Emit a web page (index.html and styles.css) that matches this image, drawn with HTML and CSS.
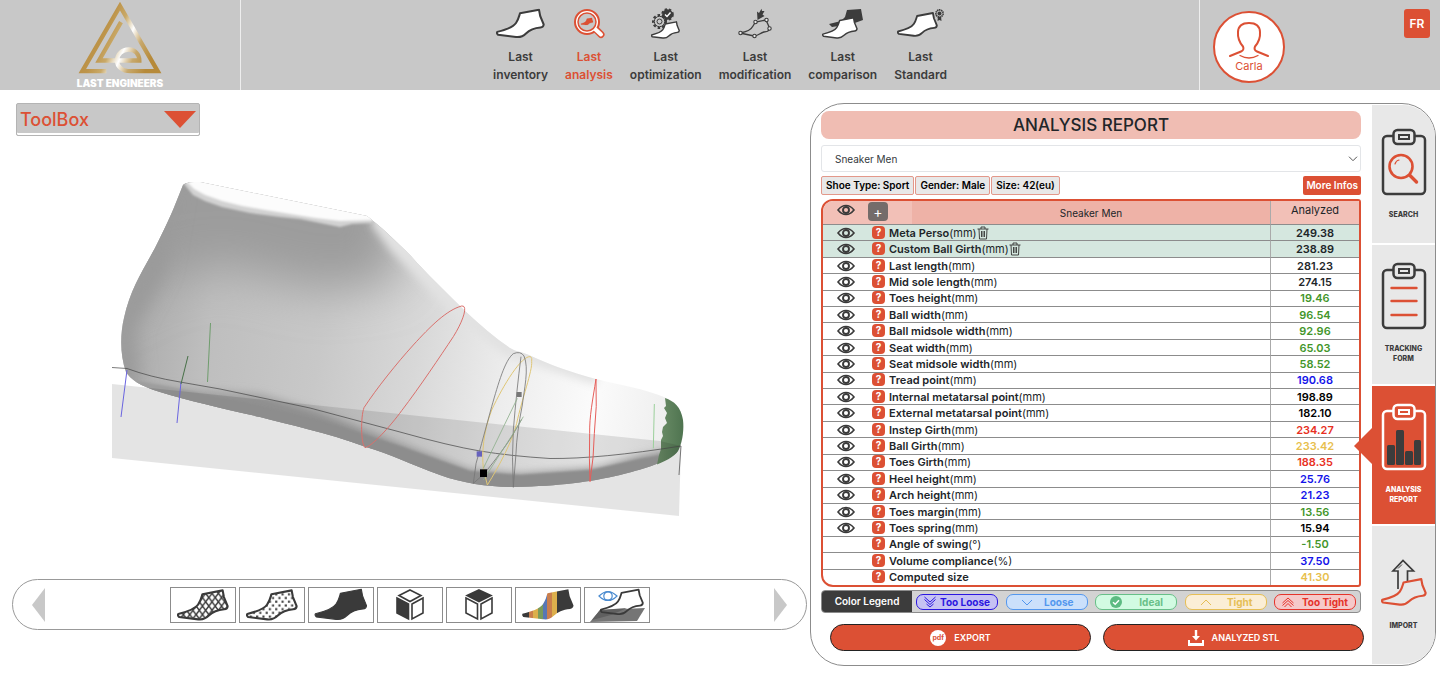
FILE: index.html
```html
<!DOCTYPE html>
<html lang="en">
<head>
<meta charset="utf-8">
<title>Last Engineers - Last analysis</title>
<meta name="viewport" content="width=device-width, initial-scale=1">
<link rel="stylesheet" href="styles.css">
</head>
<body>
<svg class="defs" aria-hidden="true">
  <symbol id="foot" viewBox="0 0 49 30"><path d="M1.2 23.4C9 21.500 17 19 20 14.500C22.500 11 23 8 24 4.800L43 1.200L44.200 7.500L47.700 16Q47.500 18.800 44.500 19C38 19.500 33 22 30 25C27 28 24 29 20 28.500L2 26.300Q.4 24.800 1.200 23.400Z" stroke-linejoin="round"/></symbol>
  <symbol id="eye" viewBox="0 0 18 12"><path d="M1 6Q4.500 1.500 9 1.500T17 6Q13.500 10.500 9 10.500T1 6Z" fill="none" stroke="#3a3a3a" stroke-width="1.600"/><circle cx="9" cy="6" r="3" fill="none" stroke="#3a3a3a" stroke-width="1.900"/></symbol>
  <symbol id="trash" viewBox="0 0 12 14"><path d="M.5 3H11.500M4 3V1H8V3M2 3L2.500 13H9.500L10 3M4.500 5V11M6 5V11M7.500 5V11" fill="none" stroke="#333" stroke-width=".9"/></symbol>
  <symbol id="board" viewBox="0 0 46 68"><rect x="2" y="8" width="42" height="58" rx="4" fill="none" stroke="currentColor" stroke-width="2.500"/><rect x="12.500" y="2" width="21" height="14" rx="4" class="board-clip" stroke="currentColor" stroke-width="2.500"/><rect x="18" y="7" width="10" height="4" fill="none" stroke="currentColor" stroke-width="2"/></symbol>
</svg>

<header class="topbar">
  <a class="brand" href="#">
    <svg viewBox="234 4 252 218" class="brand-mark" aria-hidden="true">
      <defs><linearGradient id="gold" x1="240" y1="60" x2="460" y2="160" gradientUnits="userSpaceOnUse"><stop offset="0" stop-color="#b68a3a"/><stop offset=".35" stop-color="#bd944a"/><stop offset=".5" stop-color="#c9a968"/><stop offset=".58" stop-color="#e6dac0"/><stop offset=".65" stop-color="#fff"/><stop offset=".8" stop-color="#c7a86c"/><stop offset="1" stop-color="#b68a3a"/></linearGradient></defs>
      <path d="M319 214H247L360 19L473 214H392C366 214 351 200 351 182C351 163 367 149 386 149C405 149 418 163 418 182H297L363 67" fill="none" stroke="url(#gold)" stroke-width="13"/>
    </svg>
    <span class="brand-name">LAST ENGINEERS</span>
  </a>
  <nav class="mainnav">
    <a href="#"><svg viewBox="0 0 49 30" width="49" height="31" class="ink"><use href="#foot"/></svg><span>Last<br>inventory</span></a>
    <a href="#" class="current"><svg viewBox="0 0 32 30" width="32" height="31"><path d="M23 21L28 26" stroke="#dc5034" stroke-width="7" stroke-linecap="round"/><circle cx="14" cy="13.500" r="12" fill="#fff" stroke="#dc5034" stroke-width="2"/><path d="M22 20.500L28 26" stroke="#fff" stroke-width="4" stroke-linecap="round"/><circle cx="14" cy="13.500" r="9" fill="#c8c8c8" stroke="#dc5034" stroke-width="1.500"/><svg x="7.500" y="9" width="13" height="8" fill="#dc5034" stroke="#dc5034"><use href="#foot"/></svg></svg><span>Last<br>analysis</span></a>
    <a href="#"><svg viewBox="0 0 30 31" width="30" height="31"><circle cx="8.500" cy="13.500" r="6.300" fill="none" stroke="#3c3c3c" stroke-width="2.400" stroke-dasharray="2.500 2"/><circle cx="8.500" cy="13.500" r="5.200" fill="#c8c8c8" stroke="#3c3c3c" stroke-width="1"/><circle cx="8.500" cy="13.500" r="2.500" fill="none" stroke="#3c3c3c" stroke-width="1"/><circle cx="16.500" cy="6.500" r="4.300" fill="#3c3c3c" stroke="#3c3c3c" stroke-width="2"/><circle cx="16.500" cy="6.500" r="5.300" fill="none" stroke="#3c3c3c" stroke-width="2" stroke-dasharray="2.300 2"/><path d="M14 6.500L16 8.500L19.500 4.500" fill="none" stroke="#fff" stroke-width="1.400"/><svg x="0" y="13" width="29" height="18" fill="#fff" stroke="#3c3c3c" stroke-width="2.400"><use href="#foot"/></svg></svg><span>Last<br>optimization</span></a>
    <a href="#"><svg viewBox="0 0 34 31" width="34" height="31" fill="none" stroke="#3c3c3c"><path d="M2 25C8 24 13 22 15 18L17.500 14L28 12L32 21Q30 24 26 24C22 25 20 28 16 28Z" stroke-width="1.300"/><g fill="#e8e8e8" stroke-width="1.100"><circle cx="2.500" cy="25" r="1.700"/><circle cx="17.500" cy="14" r="1.700"/><circle cx="28.500" cy="12" r="1.700"/><circle cx="31.500" cy="20.500" r="1.700"/><circle cx="16.500" cy="28" r="1.700"/></g><path d="M19.500 12L19 3.500L21 5L23.500 .8L24 3L26.500 3L24.500 6.500L26.500 8Z" fill="#3c3c3c" stroke="none"/></svg><span>Last<br>modification</span></a>
    <a href="#"><svg viewBox="0 0 42 31" width="42" height="31"><path d="M25 2L39 1L41 12L30 16L10 19L7 16L19 13L23 9Z" fill="#3c3c3c"/><svg x="0" y="9" width="36" height="22" fill="#fff" stroke="#3c3c3c" stroke-width="2"><use href="#foot"/></svg></svg><span>Last<br>comparison</span></a>
    <a href="#"><svg viewBox="0 0 48 31" width="48" height="31"><svg x="0" y="4" width="41" height="25" fill="#fff" stroke="#3c3c3c" stroke-width="2.200"><use href="#foot"/></svg><path d="M41 8L40.500 13L42.500 12L44.500 13L44 8" fill="#3c3c3c"/><circle cx="42.500" cy="5.500" r="3.600" fill="#c8c8c8" stroke="#3c3c3c" stroke-width="1.700" stroke-dasharray="1.500 .5"/><circle cx="42.500" cy="5.500" r="2" fill="#3c3c3c"/></svg><span>Last<br>Standard</span></a>
  </nav>
  <div class="account">
    <button class="user" type="button"><svg viewBox="0 0 42 38" width="42" height="38" fill="none" stroke="#dc5034" stroke-linecap="round"><path d="M2 35L13 30.500Q16.500 29 15 25.500C12 22 9.500 17 10 11Q10.500 2 21 2T32 11C32.500 17 30 22 27 25.500Q25.500 29 29 30.500L40 35" stroke-width="2"/><path d="M12 34.500Q21 39.500 30 34.500" stroke-width="1.300"/></svg><span>Carla</span></button>
    <button class="lang" type="button">FR</button>
  </div>
</header>

<main class="workspace">
  <section class="viewer">
    <button class="toolbox" type="button"><span>ToolBox</span><svg viewBox="0 0 32 17" width="32" height="17" fill="#dc5034"><path d="M0 0H32L16 17Z"/></svg></button>
    <svg class="scene" viewBox="0 136 810 443" role="img" aria-label="3D view of the last">
      <defs>
        <path id="body-shape" d="M183 185C185 182.500 192 182 200 182L367 216C380 226 395 240 411 256C425 272 445 291 465 311C480 325 495 338 510 348C516 352 524 352 531 356C550 365 574 373 596 379C620 385 645 389 664 397C676 402 681 408 683 420C684 435 682 447 676 453C665 463 640 470 620 475C590 482 560 486 515 487C490 487 465 484 440 475C410 464 390 454 366 447C325 432 290 425 260 417C220 408 190 401 160 392C140 386 130 379 126 372C120 355 120 335 124 318C130 290 142 272 155 248Q170 218 175 205Z"/>
        <clipPath id="body-clip"><use href="#body-shape"/></clipPath>
        <linearGradient id="body-tone" x1="121" y1="330" x2="683" y2="420" gradientUnits="userSpaceOnUse"><stop offset="0" stop-color="#a8a8a8"/><stop offset=".15" stop-color="#bebebe"/><stop offset=".35" stop-color="#c8c8c8"/><stop offset=".52" stop-color="#d8d8d8"/><stop offset=".68" stop-color="#ededed"/><stop offset=".84" stop-color="#fbfbfb"/><stop offset="1" stop-color="#ececec"/></linearGradient>
        <linearGradient id="toe-tone" x1="0" x2="1"><stop offset="0" stop-color="#6d8f69"/><stop offset="1" stop-color="#4f7450"/></linearGradient>
        <filter id="soft-l" x="-50%" y="-50%" width="200%" height="200%"><feGaussianBlur stdDeviation="24"/></filter>
        <filter id="soft-m" x="-50%" y="-50%" width="200%" height="200%"><feGaussianBlur stdDeviation="9"/></filter>
        <filter id="soft-s" x="-50%" y="-50%" width="200%" height="200%"><feGaussianBlur stdDeviation="4"/></filter>
        <filter id="soft-xs"><feGaussianBlur stdDeviation="1"/></filter>
      </defs>
      <use href="#body-shape" fill="url(#body-tone)"/>
      <g clip-path="url(#body-clip)">
        <path d="M120 120L400 150L395 240L400 280L320 290L220 265L160 280L80 320Z" fill="#9c9c9c" filter="url(#soft-l)"/>
        <path d="M180 180L114 320L112 395L140 384L134 330L165 270Z" fill="#9a9a9a" filter="url(#soft-m)"/>
        <path d="M372 205L480 310L530 345L600 370L596 385L505 356L450 312L390 250L372 226Z" fill="#e2e2e2" filter="url(#soft-s)"/>
        <path d="M110 382L200 390L260 394L320 412L400 444L470 470L520 474L600 468L640 456L690 446V510H110Z" fill="#a0a0a0" filter="url(#soft-s)"/>
        <path d="M120 378L160 385L240 401L320 420L400 446L470 471L520 475L590 470L640 459L690 450V510H110Z" fill="#9e9e9e" filter="url(#soft-xs)"/>
        <path d="M184 184L193 195L205 201L222 207L250 213L280 217L300 219L320 223L340 227L352 224L372 223L372 205L190 175Z" fill="#d2d2d2" filter="url(#soft-xs)"/>
        <path d="M187 182L194 189L205 195L222 201L242 206L265 210L290 214L315 218L340 221L377 220L367 208L190 175Z" fill="#fcfcfc" filter="url(#soft-xs)"/>
      </g>
      <path d="M665 398L666 406L664 408L667 413L665 418L667 423L663 427L662 432L663 436L661 440V449L659 455L657 464.500C668 460 677 455 679 449C683 440 684 428 683 420C681 407 674 401 665 398Z" fill="url(#toe-tone)"/>
      <path d="M112 384L660 441L681 446L679 516L112 458Z" fill="#000" opacity=".105"/>
      <g fill="none" stroke-width="1">
        <path d="M112 367.500L127 368.500Q150 377 180 382L220 389L310 408L400 432Q450 446 480 451T550 458.500Q600 459 681 446L679 475" stroke="#444" opacity=".7"/>
        <path d="M127 370L121 417M181 382L177 423" stroke="#6a64e0"/>
        <path d="M188 356L181 384" stroke="#477047"/>
        <path d="M210.500 323L207.500 382" stroke="#6f9d6d"/>
      </g>
      <g transform="translate(340 290) scale(.33333)" fill="none" stroke-width="3">
        <path d="M365 48C320 60 270 110 220 165C170 220 110 295 72 353C62 380 62 460 75 473C95 470 150 410 185 362C240 290 300 200 340 140C365 100 380 60 372 50Q370 48 365 48Z" stroke="#d96f6b"/>
        <path d="M768 267C758 330 748 380 749 430Q747 510 750 575Q762 500 763 430Q772 350 768 267Z" stroke="#e65d59"/>
        <path d="M572 200C545 195 490 285 455 360C430 425 425 490 430 535L442 585C480 525 518 450 530 400C545 330 578 240 575 215Q577 204 572 200Z" stroke="#dfc675"/>
        <path d="M400 580Q404 520 425 460L455 350C475 280 495 210 520 191Q542 182 552 198C568 235 552 300 547 345Q530 430 528 490L520 592Q515 500 520 420Q530 300 543 200M400 580L432 552Q490 480 515 440L545 388" stroke="#777" stroke-width="2.500"/>
        <path d="M532 325L430 535M430 570L520 430L550 380" stroke="#8fb08d" stroke-width="2.500"/>
        <path d="M943 342L940 475" stroke="#9bd09b"/>
        <path d="M530 306H545V321H530Z" fill="#777" stroke="none"/><path d="M410 484H426V500H410Z" fill="#6762bd" stroke="none"/><path d="M420 538H441V561H420Z" fill="#000" stroke="none"/>
      </g>
    </svg>
    <div class="viewbar">
      <button class="step" type="button" aria-label="Previous"><svg viewBox="0 0 13 34" width="13" height="34" fill="#c8c8c8"><path d="M13 0V34L0 17Z"/></svg></button>
      <div class="modes">
        <button type="button" aria-label="Wireframe"><svg viewBox="0 0 52 32" width="52" height="32"><defs><pattern id="mesh" width="6" height="8" patternUnits="userSpaceOnUse"><path d="M0 0L6 8M6 0L0 8" stroke="#3a3a3a" stroke-width="1.400"/></pattern></defs><g fill="url(#mesh)" stroke="#3a3a3a" stroke-width="2"><use href="#foot" width="52" height="32"/></g></svg></button>
        <button type="button" aria-label="Points"><svg viewBox="0 0 52 32" width="52" height="32"><defs><pattern id="dots" width="6" height="7" patternUnits="userSpaceOnUse"><path d="M.5 .5H2.500V2.500H.5ZM3.500 4H5.500V6H3.500Z" fill="#3a3a3a"/></pattern></defs><g fill="url(#dots)" stroke="#3a3a3a" stroke-width="2"><use href="#foot" width="52" height="32"/></g></svg></button>
        <button type="button" aria-label="Solid"><svg viewBox="0 0 54 33" width="54" height="33" fill="#3a3a3a" stroke="#3a3a3a"><use href="#foot"/></svg></button>
        <button type="button" aria-label="Side view"><svg viewBox="0 0 30 33" width="30" height="33" fill="none" stroke="#3a3a3a" stroke-width="1.600"><path d="M15 2L26 7.500L15 13.500L4 7.500Z"/><path d="M2 10L13.500 16V31L2 25Z" fill="#3a3a3a"/><path d="M28 10L17 16V31L28 25Z"/></svg></button>
        <button type="button" aria-label="Top view"><svg viewBox="0 0 30 33" width="30" height="33" fill="none" stroke="#3a3a3a" stroke-width="1.600"><path d="M15 2L27 7.500L15 13.500L3 7.500Z" fill="#3a3a3a"/><path d="M2 10L13.500 16V31L2 25Z"/><path d="M28 10L17 16V31L28 25Z"/></svg></button>
        <button type="button" aria-label="Color map"><svg viewBox="0 0 54 33" width="54" height="33"><defs><linearGradient id="bands" x1="0" x2="1"><stop offset=".13" stop-color="#3a3a3a"/><stop offset=".13" stop-color="#c97e4d"/><stop offset=".21" stop-color="#c97e4d"/><stop offset=".21" stop-color="#dcaf4c"/><stop offset=".31" stop-color="#dcaf4c"/><stop offset=".31" stop-color="#7a9b5c"/><stop offset=".4" stop-color="#7a9b5c"/><stop offset=".4" stop-color="#5877b5"/><stop offset=".49" stop-color="#5877b5"/><stop offset=".49" stop-color="#c97e4d"/><stop offset=".58" stop-color="#c97e4d"/><stop offset=".58" stop-color="#dcaf4c"/><stop offset=".67" stop-color="#dcaf4c"/><stop offset=".67" stop-color="#3a3a3a"/></linearGradient></defs><g fill="url(#bands)"><use href="#foot"/></g></svg></button>
        <button type="button" aria-label="Ground plane"><svg viewBox="0 0 60 34" width="60" height="34"><path d="M13 22L58 20L50 33L3 34Z" fill="#757575"/><path d="M13 22L40 20L24 27L5 32Z" fill="#606060"/><g fill="none" stroke="#3a3a3a" stroke-width="2"><use href="#foot" x="13" width="44" height="28"/></g><path d="M12 8Q21 -1 30 8Q21 17 12 8Z" fill="#fff" stroke="#4a8bd0" stroke-width="1.200"/><circle cx="21" cy="8" r="4.200" fill="none" stroke="#4a8bd0" stroke-width="1.200"/></svg></button>
      </div>
      <button class="step" type="button" aria-label="Next"><svg viewBox="0 0 13 34" width="13" height="34" fill="#c8c8c8"><path d="M0 0V34L13 17Z"/></svg></button>
    </div>
  </section>

  <section class="panel">
    <div class="report">
      <h1>ANALYSIS REPORT</h1>
      <div class="picker"><select aria-label="Last model"><option>Sneaker Men</option></select><svg viewBox="0 0 10 6" width="10" height="6" fill="none" stroke="#555"><path d="M1 .7L5 4.700L9 .7"/></svg></div>
      <div class="facts"><span>Shoe Type: Sport</span><span>Gender: Male</span><span>Size: 42(eu)</span><button type="button">More Infos</button></div>
      <div class="frame">
      <table>
        <colgroup><col class="c-eye"><col class="c-add"><col><col class="c-val"></colgroup>
        <thead><tr><th><button type="button" class="show" aria-label="Toggle all"><svg><use href="#eye"/></svg></button></th><th class="adder"><button type="button" class="add" aria-label="Add">+</button></th><th class="model">Sneaker Men</th><th class="analyzed">Analyzed</th></tr></thead>
        <tbody>
        <tr class="custom"><td><button type="button" class="show" aria-label="Show"><svg><use href="#eye"/></svg></button></td><td colspan="2"><button type="button" class="help">?</button><b>Meta Perso</b>(mm)<button type="button" class="del" aria-label="Delete"><svg><use href="#trash"/></svg></button></td><td>249.38</td></tr>
        <tr class="custom"><td><button type="button" class="show" aria-label="Show"><svg><use href="#eye"/></svg></button></td><td colspan="2"><button type="button" class="help">?</button><b>Custom Ball Girth</b>(mm)<button type="button" class="del" aria-label="Delete"><svg><use href="#trash"/></svg></button></td><td>238.89</td></tr>
        <tr><td><button type="button" class="show" aria-label="Show"><svg><use href="#eye"/></svg></button></td><td colspan="2"><button type="button" class="help">?</button><b>Last length</b>(mm)</td><td>281.23</td></tr>
        <tr><td><button type="button" class="show" aria-label="Show"><svg><use href="#eye"/></svg></button></td><td colspan="2"><button type="button" class="help">?</button><b>Mid sole length</b>(mm)</td><td>274.15</td></tr>
        <tr><td><button type="button" class="show" aria-label="Show"><svg><use href="#eye"/></svg></button></td><td colspan="2"><button type="button" class="help">?</button><b>Toes height</b>(mm)</td><td class="ideal">19.46</td></tr>
        <tr><td><button type="button" class="show" aria-label="Show"><svg><use href="#eye"/></svg></button></td><td colspan="2"><button type="button" class="help">?</button><b>Ball width</b>(mm)</td><td class="ideal">96.54</td></tr>
        <tr><td><button type="button" class="show" aria-label="Show"><svg><use href="#eye"/></svg></button></td><td colspan="2"><button type="button" class="help">?</button><b>Ball midsole width</b>(mm)</td><td class="ideal">92.96</td></tr>
        <tr><td><button type="button" class="show" aria-label="Show"><svg><use href="#eye"/></svg></button></td><td colspan="2"><button type="button" class="help">?</button><b>Seat width</b>(mm)</td><td class="ideal">65.03</td></tr>
        <tr><td><button type="button" class="show" aria-label="Show"><svg><use href="#eye"/></svg></button></td><td colspan="2"><button type="button" class="help">?</button><b>Seat midsole width</b>(mm)</td><td class="ideal">58.52</td></tr>
        <tr><td><button type="button" class="show" aria-label="Show"><svg><use href="#eye"/></svg></button></td><td colspan="2"><button type="button" class="help">?</button><b>Tread point</b>(mm)</td><td class="loose">190.68</td></tr>
        <tr><td><button type="button" class="show" aria-label="Show"><svg><use href="#eye"/></svg></button></td><td colspan="2"><button type="button" class="help">?</button><b>Internal metatarsal point</b>(mm)</td><td class="plain">198.89</td></tr>
        <tr><td><button type="button" class="show" aria-label="Show"><svg><use href="#eye"/></svg></button></td><td colspan="2"><button type="button" class="help">?</button><b>External metatarsal point</b>(mm)</td><td class="plain">182.10</td></tr>
        <tr><td><button type="button" class="show" aria-label="Show"><svg><use href="#eye"/></svg></button></td><td colspan="2"><button type="button" class="help">?</button><b>Instep Girth</b>(mm)</td><td class="over">234.27</td></tr>
        <tr><td><button type="button" class="show" aria-label="Show"><svg><use href="#eye"/></svg></button></td><td colspan="2"><button type="button" class="help">?</button><b>Ball Girth</b>(mm)</td><td class="tight">233.42</td></tr>
        <tr><td><button type="button" class="show" aria-label="Show"><svg><use href="#eye"/></svg></button></td><td colspan="2"><button type="button" class="help">?</button><b>Toes Girth</b>(mm)</td><td class="over">188.35</td></tr>
        <tr><td><button type="button" class="show" aria-label="Show"><svg><use href="#eye"/></svg></button></td><td colspan="2"><button type="button" class="help">?</button><b>Heel height</b>(mm)</td><td class="loose">25.76</td></tr>
        <tr><td><button type="button" class="show" aria-label="Show"><svg><use href="#eye"/></svg></button></td><td colspan="2"><button type="button" class="help">?</button><b>Arch height</b>(mm)</td><td class="loose">21.23</td></tr>
        <tr><td><button type="button" class="show" aria-label="Show"><svg><use href="#eye"/></svg></button></td><td colspan="2"><button type="button" class="help">?</button><b>Toes margin</b>(mm)</td><td class="ideal">13.56</td></tr>
        <tr><td><button type="button" class="show" aria-label="Show"><svg><use href="#eye"/></svg></button></td><td colspan="2"><button type="button" class="help">?</button><b>Toes spring</b>(mm)</td><td class="plain">15.94</td></tr>
        <tr><td></td><td colspan="2"><button type="button" class="help">?</button><b>Angle of swing</b>(°)</td><td class="ideal">-1.50</td></tr>
        <tr><td></td><td colspan="2"><button type="button" class="help">?</button><b>Volume compliance</b>(%)</td><td class="loose">37.50</td></tr>
        <tr><td></td><td colspan="2"><button type="button" class="help">?</button><b>Computed size</b></td><td class="tight">41.30</td></tr>
        </tbody>
      </table>
      </div>
      <div class="legend">
        <strong>Color Legend</strong>
        <ul>
          <li class="k-too-loose"><svg viewBox="0 0 12 12"><path d="M.5 1L6 6L11.500 1M.5 3.500L6 8.500L11.500 3.500M2.500 8L6 11L9.500 8"/></svg>Too Loose</li>
          <li class="k-loose"><svg viewBox="0 0 12 12"><path d="M1 4L6 9L11 4"/></svg>Loose</li>
          <li class="k-ideal"><svg viewBox="0 0 12 12"><circle cx="6" cy="6" r="6" fill="#5dbb82" stroke="none"/><path d="M3 6.200L5.200 8.300L9 4.200" stroke="#fff" stroke-width="1.500"/></svg>Ideal</li>
          <li class="k-tight"><svg viewBox="0 0 12 12"><path d="M1 9L6 4L11 9"/></svg>Tight</li>
          <li class="k-too-tight"><svg viewBox="0 0 12 12"><path d="M.5 7L6 2L11.500 7M.5 9.500L6 4.500L11.500 9.500M2.500 11L6 7.500L9.500 11"/></svg>Too Tight</li>
        </ul>
      </div>
      <div class="actions">
        <button type="button"><span class="pdf">pdf</span>EXPORT</button>
        <button type="button"><svg viewBox="0 0 16 16" width="16" height="16" fill="#fff"><path d="M6.800 0H9.200V6H12L8 10.500L4 6H6.800ZM0 10H2V13H14V10H16V16H0Z"/></svg>ANALYZED STL</button>
      </div>
    </div>
    <nav class="tabs">
      <a href="#"><svg viewBox="0 0 46 68" width="46" height="68"><use href="#board"/><g fill="none" stroke="#dc5034" stroke-linecap="round"><circle cx="20" cy="38.500" r="11.500" stroke-width="2.600"/><path d="M14 36Q15 32.500 18 32" stroke-width="1.200"/><path d="M29 47.500L35.500 54" stroke-width="3.400"/></g></svg><span>SEARCH</span></a>
      <a href="#"><svg viewBox="0 0 46 68" width="46" height="68"><use href="#board"/><path d="M10.500 26H35.500M10.500 39H35.500M10.500 53H35.500" stroke="#dc5034" stroke-width="2.400" stroke-linecap="round"/></svg><span>TRACKING<br>FORM</span></a>
      <a href="#" class="active"><svg viewBox="0 0 46 68" width="46" height="68"><use href="#board"/><g fill="#3c3c3c"><rect x="6" y="42" width="8" height="20" rx="1.500"/><rect x="15" y="27" width="8" height="35" rx="1.500"/><rect x="24" y="48" width="8" height="14" rx="1.500"/><rect x="33" y="37" width="7" height="25" rx="1.500"/></g></svg><span>ANALYSIS<br>REPORT</span></a>
      <a href="#" class="import"><svg viewBox="0 0 46 48" width="46" height="48"><path d="M17 30V12H12L22 1.500L32.500 12H26.500V22" fill="none" stroke="#3c3c3c" stroke-width="1.700"/><path d="M17 9.500L21 5.500" stroke="#3c3c3c" stroke-width="1"/><g fill="#e8e8e8" stroke="#dc5034" stroke-width="2.300"><use href="#foot" x="0" y="19" width="46" height="28"/></g></svg><span>IMPORT</span></a>
    </nav>
  </section>
</main>
</body>
</html>
```
FILE: styles.css
```css
* { box-sizing: border-box; }
body { margin: 0; background: #fff; color: #212529; font-family: Inter, "Liberation Sans", sans-serif; font-size: 11px; }
button, select { font: inherit; color: inherit; margin: 0; padding: 0; border: 0; background: none; cursor: pointer; }
a { color: inherit; text-decoration: none; }
svg { display: block; flex: none; }
.defs { position: absolute; width: 0; height: 0; }

.topbar { display: grid; grid-template-columns: 241px 1fr 241px; height: 90px; background: #c8c8c8; }
.brand { display: flex; flex-direction: column; align-items: center; gap: 4px; padding-top: 1px; border-right: 1px solid #eee; }
.brand-mark { width: 84px; height: 73px; }
.brand-name { color: #fff; font-size: 10px; font-weight: 900; line-height: 10px; }
.mainnav { display: flex; justify-content: center; gap: 17px; }
.mainnav a { display: flex; flex-direction: column; align-items: center; gap: 9px; padding-top: 8px; color: #3c3c3c; font-size: 12px; font-weight: 600; line-height: 18px; text-align: center; }
.mainnav .current { color: #dc5034; }
.ink { fill: #fff; stroke: #3c3c3c; stroke-width: 2; }
.account { display: flex; justify-content: space-between; align-items: flex-start; padding: 9px 10px 0 13px; border-left: 1px solid #eee; }
.user { display: flex; flex-direction: column; align-items: center; width: 72px; height: 72px; margin-top: 2px; padding-top: 8px; border: 2px solid #dc5034; border-radius: 50%; background: #fff; color: #dc5034; font-size: 11px; line-height: 14px; }
.lang { width: 26px; height: 29px; border-radius: 3px; background: #dc5034; color: #fff; font-size: 12px; font-weight: 600; }

.workspace { display: grid; grid-template-columns: 1fr 626px; padding: 13px 4px 8px 0; }
.viewer { display: flex; flex-direction: column; min-width: 0; }
.toolbox { display: flex; align-items: center; justify-content: space-between; width: 184px; height: 33px; margin-left: 16px; padding: 0 3px; border: 1px solid #b4b4b4; border-radius: 2px; background: #c8c8c8; box-shadow: inset 0 -2px #fff; color: #dc5034; font-size: 18px; font-weight: 500; }
.scene { width: 100%; height: auto; }
.viewbar { display: flex; align-items: center; justify-content: space-between; height: 51px; margin: 0 3px 0 12px; padding: 0 19px; border: 1px solid #999; border-radius: 26px; }
.modes { display: flex; gap: 3px; }
.modes button { display: grid; place-items: center; width: 66px; height: 36px; border: 1px solid #8c8c8c; overflow: hidden; }

.panel { display: grid; grid-template-columns: 1fr 63px; gap: 11px; padding: 1px 0; border: 1px solid #8c8c8c; border-radius: 34px; }
.report { display: flex; flex-direction: column; padding: 6px 0 13px 10px; }
h1 { margin: 0 0 6px; border-radius: 8px; background: #f0bdb3; font-size: 17px; font-weight: 500; line-height: 28px; text-align: center; }
.picker { display: grid; align-items: center; margin-bottom: 4px; font-size: 10px; }
.picker select, .picker svg { grid-area: 1 / 1; }
.picker select { appearance: none; height: 27px; padding: 0 13px; border: 1px solid #e3e5e8; border-radius: 3px; background: #fff; color: #343a40; }
.picker svg { justify-self: end; margin-right: 3px; pointer-events: none; }
.facts { display: flex; gap: 1px; margin-bottom: 4px; font-size: 10px; font-weight: 600; line-height: 17px; color: #000; }
.facts span { padding: 0 4px; border: 1px solid #e3988a; border-radius: 2px; background: #e8e8e8; }
.facts button { margin-left: auto; padding: 0 3px; border-radius: 2px; background: #dc5034; color: #fff; }
.frame { border: 2px solid #dc5034; border-radius: 12px 3px 3px 12px; overflow: hidden; }
table { width: 100%; height: 384px; border-collapse: separate; border-spacing: 0; table-layout: fixed; line-height: 14px; }
.c-eye { width: 45px; } .c-add { width: 44px; } .c-val { width: 89px; }
th, td { padding: 0; border-bottom: 1px solid #8c8c8c; white-space: nowrap; }
tr:last-child td { border-bottom: 0; }
thead th { height: 24px; border-bottom: 1px solid #8c8c8c; background: #f2c0b7; font-weight: 400; }
thead .model { background: #eeb2a7; font-size: 10px; }
thead .analyzed { padding-bottom: 6px; }
thead .show { padding-bottom: 5px; }
thead .adder { vertical-align: top; }
td:last-child, th:last-child { border-left: 1px solid #aaa; }
td:last-child { font-weight: 600; text-align: center; }
b { font-weight: 600; }
.custom td { background: #d5e7df; }
.show { display: block; margin: 0 auto; }
.show svg { width: 18px; height: 12px; }
.add { display: block; width: 20px; height: 19px; margin-top: 1px; border-radius: 4px; background: #746c6a; color: #fff; font-size: 14px; line-height: 18px; }
td[colspan] { padding-left: 4px; }
.help { display: inline-block; width: 13px; height: 13px; margin-right: 4px; border-radius: 4px; background: #dc5034; color: #fff; font-size: 10px; font-weight: 700; line-height: 13px; vertical-align: top; }
.del { vertical-align: top; }
.del svg { width: 12px; height: 14px; }
.ideal { color: #43962b; } .loose { color: #1414ea; } .tight { color: #e8bf4e; } .over { color: #e83022; } .plain { color: #000; }

.legend { display: flex; height: 23px; margin-top: 3px; border: 1px solid #8c8c8c; border-radius: 4px; background: #d3d3d3; overflow: hidden; }
.legend strong { width: 90px; background: #3c3c3c; color: #fff; font-size: 10px; font-weight: 600; line-height: 20px; text-align: center; }
.legend ul { display: flex; flex: 1; justify-content: space-between; align-items: center; margin: 0; padding: 0 4px; list-style: none; }
.legend li { display: flex; align-items: center; justify-content: space-between; width: 82px; height: 16px; border: 1px solid; border-radius: 7px; font-size: 10px; font-weight: 700; line-height: 14px; white-space: nowrap; padding: 0 7px; }
.legend svg { width: 12px; height: 12px; fill: none; stroke: currentColor; }
.k-too-loose { color: #2b17e0; background: #c6c2f3; }
.legend .k-loose, .legend .k-ideal, .legend .k-tight { padding: 0 13px 0 14px; }
.k-loose { color: #5397ee; background: #cbe0fb; }
.k-ideal { color: #68bf88; background: #d2fbe2; }
.k-tight { color: #e6be55; background: #fbeed6; }
.k-too-tight { color: #e5332a; background: #f5c9c9; }
.actions { display: grid; grid-template-columns: 1fr 1fr; gap: 12px; margin: 11px -3px 0 9px; }
.actions button { display: flex; align-items: center; justify-content: center; gap: 8px; height: 27px; border: 1px solid #222; border-radius: 14px; background: #dc5034; color: #fff; font-size: 9px; font-weight: 600; }
.pdf { width: 16px; height: 16px; border-radius: 50%; background: #fff; color: #dc5034; font-size: 7px; font-weight: 700; line-height: 15px; text-align: center; }

.tabs { --tab: #e8e8e8; display: grid; grid-template-rows: repeat(4, 1fr); gap: 2px; }
.tabs a { position: relative; display: flex; flex-direction: column; align-items: center; gap: 14px; padding-top: 23px; background: var(--tab); color: #3c3c3c; }
.tabs a:first-child { border-top-right-radius: 32px; }
.tabs a:last-child { border-bottom-right-radius: 32px; }
.tabs a:not(:first-child) { padding-top: 17px; }
.tabs span { font-size: 7px; font-weight: 800; line-height: 10px; text-align: center; }
.board-clip { fill: var(--tab); }
.tabs a.active { --tab: #dc5034; color: #fff; }
.active::before { content: ""; position: absolute; right: 100%; top: 42px; border: 18px solid transparent; border-left: 0; border-right-color: #dc5034; }
.tabs .import { --tab: #e8e8e8; }
.tabs a.import { padding-top: 33px; }
```
